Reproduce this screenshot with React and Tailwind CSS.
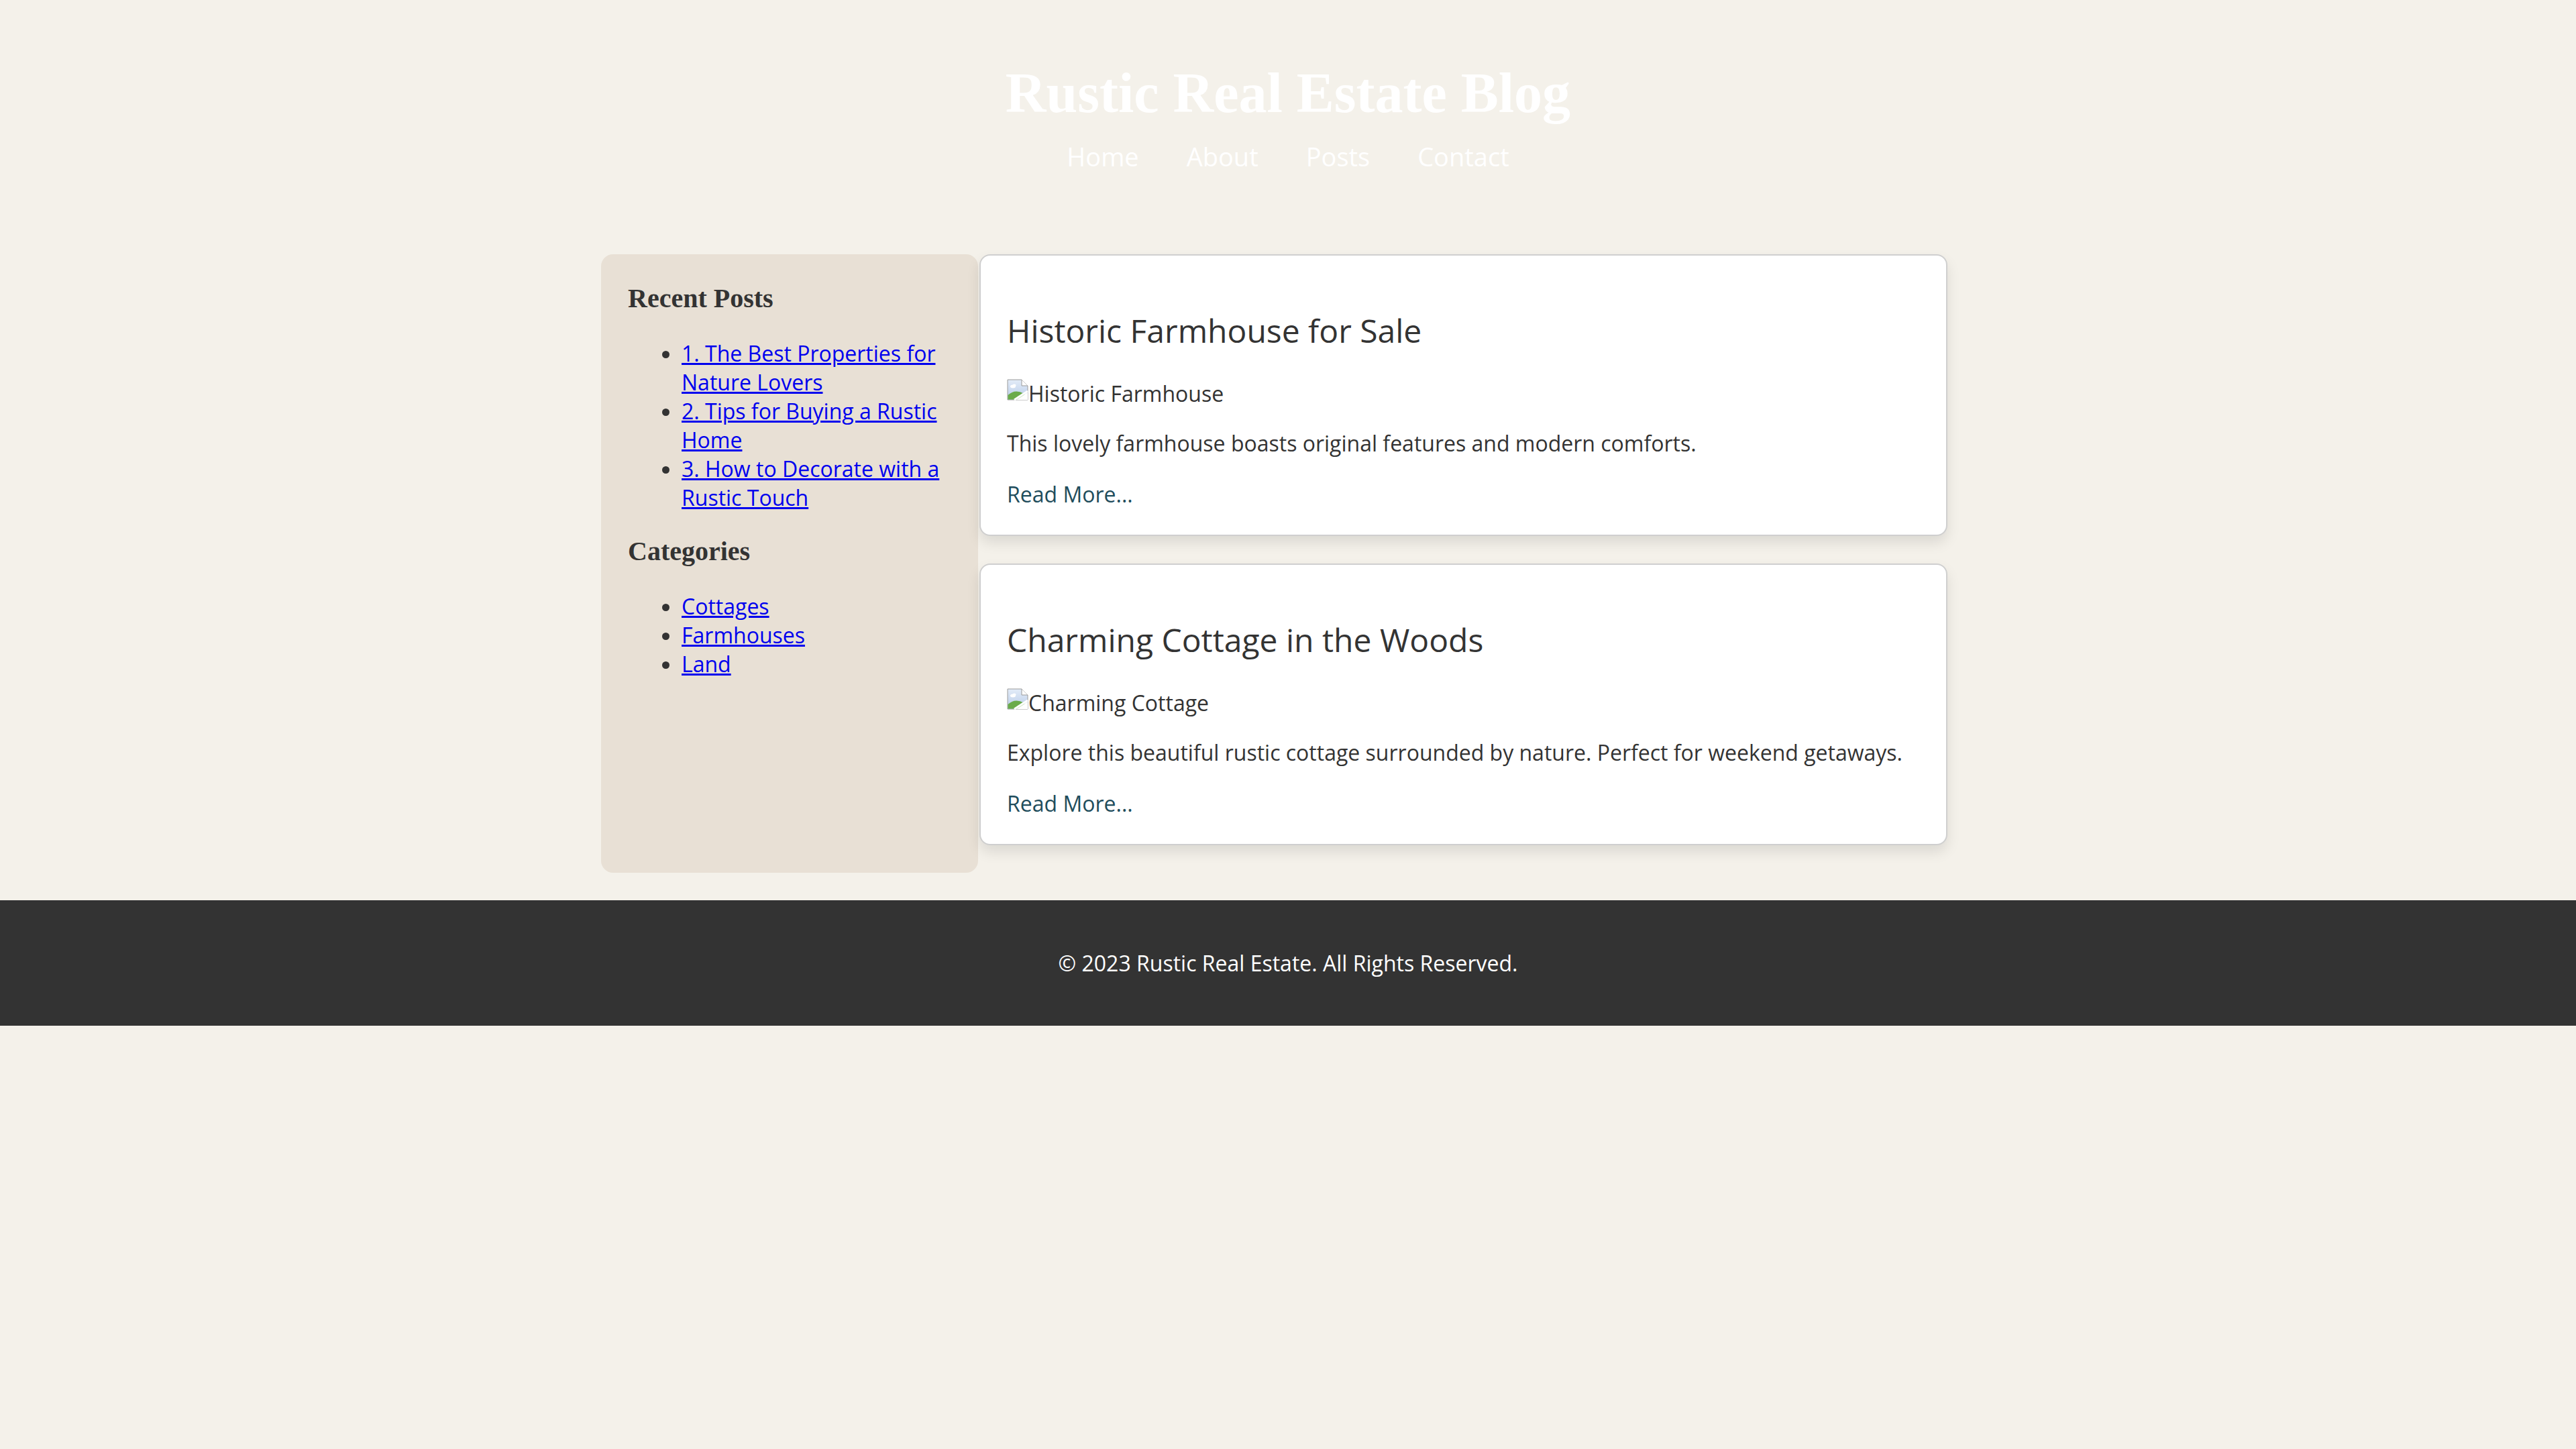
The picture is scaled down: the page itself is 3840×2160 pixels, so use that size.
import React from "react";

function BrokenImg() {
  return (
    <svg
      width="32"
      height="32"
      viewBox="0 0 32 32"
      className="inline-block align-baseline mb-[2px]"
    >
      <defs>
        <linearGradient id="sky" x1="0" y1="0" x2="0" y2="1">
          <stop offset="0" stopColor="#e3ecf8" />
          <stop offset="1" stopColor="#b7cbe8" />
        </linearGradient>
      </defs>
      <path d="M1 1 H22 L31 10 V31 H1 Z" fill="url(#sky)" stroke="#9a9a9a" strokeWidth="1" />
      <path d="M22 1 V10 H31" fill="#ffffff" stroke="#9a9a9a" strokeWidth="1" />
      <ellipse cx="9" cy="11" rx="4" ry="2.5" fill="#ffffff" />
      <ellipse cx="11" cy="9.5" rx="2.5" ry="2" fill="#ffffff" />
      <path d="M1.5 30.5 V24 Q12 14 26 22 L26 30.5 Z" fill="#6aab4a" />
      <path d="M11 31 L31 18" stroke="#ffffff" strokeWidth="3" />
      <path d="M14 31 L31 20 V31 Z" fill="#ffffff" />
    </svg>
  );
}

function Card({ title, alt, text }) {
  return (
    <div className="mb-[41px] rounded-[16px] border-2 border-[#cfcfcf] bg-white pl-[39px] pr-[40px] pt-[40px] pb-[38px] shadow-[0_10px_20px_rgba(0,0,0,0.1)]">
      <h2 className="mt-[39px] text-[48px] leading-[66px] font-normal text-[#333333]">{title}</h2>
      <p className="mt-[39px] text-[32px] leading-[44px]">
        <BrokenImg />
        {alt}
      </p>
      <p className="mt-[30px] text-[32px] leading-[44px]">{text}</p>
      <p className="mt-[32px] text-[32px] leading-[44px]">
        <a href="#" className="text-[#1f4d5c] no-underline">Read More...</a>
      </p>
    </div>
  );
}

export default function App() {
  const serif = "font-['Liberation_Serif','Times_New_Roman',serif]";
  return (
    <div className="min-h-screen bg-[#f4f1ea] font-['Open_Sans',sans-serif] text-[#333333]">
      <header className="pt-[89px] text-center text-white">
        <h1 className={`${serif} text-[84px] leading-[100px] font-bold`}>Rustic Real Estate Blog</h1>
        <nav className="mt-[13px] flex justify-center gap-[71px] text-[38px] leading-[62px]">
          <a href="#" className="text-white">Home</a>
          <a href="#" className="text-white">About</a>
          <a href="#" className="text-white">Posts</a>
          <a href="#" className="text-white">Contact</a>
        </nav>
      </header>

      <div className="mx-auto mt-[115px] flex w-[2048px]">
        <aside className="w-[562px] shrink-0 rounded-[18px] bg-[#e8e0d5] px-[40px] pt-[40px]">
          <h3 className={`${serif} text-[40px] leading-[52px] font-bold text-[#333333]`}>Recent Posts</h3>
          <ul className="mt-[34px] list-disc pl-[80px] text-[32px] leading-[43px]">
            <li><a href="#" className="text-[#0000ee] underline">1. The Best Properties for Nature Lovers</a></li>
            <li><a href="#" className="text-[#0000ee] underline">2. Tips for Buying a Rustic Home</a></li>
            <li><a href="#" className="text-[#0000ee] underline">3. How to Decorate with a Rustic Touch</a></li>
          </ul>
          <h3 className={`${serif} mt-[33px] text-[40px] leading-[52px] font-bold text-[#333333]`}>Categories</h3>
          <ul className="mt-[34px] list-disc pl-[80px] text-[32px] leading-[43px]">
            <li><a href="#" className="text-[#0000ee] underline">Cottages</a></li>
            <li><a href="#" className="text-[#0000ee] underline">Farmhouses</a></li>
            <li><a href="#" className="text-[#0000ee] underline">Land</a></li>
          </ul>
        </aside>
        <main className="ml-[2px] w-[1443px] shrink-0">
          <Card
            title="Historic Farmhouse for Sale"
            alt="Historic Farmhouse"
            text="This lovely farmhouse boasts original features and modern comforts."
          />
          <Card
            title="Charming Cottage in the Woods"
            alt="Charming Cottage"
            text="Explore this beautiful rustic cottage surrounded by nature. Perfect for weekend getaways."
          />
        </main>
      </div>

      <footer className="mt-[41px] bg-[#333333] pt-[72px] pb-[71px] text-center text-[32px] leading-[44px] text-white">
        <p>© 2023 Rustic Real Estate. All Rights Reserved.</p>
      </footer>
    </div>
  );
}
